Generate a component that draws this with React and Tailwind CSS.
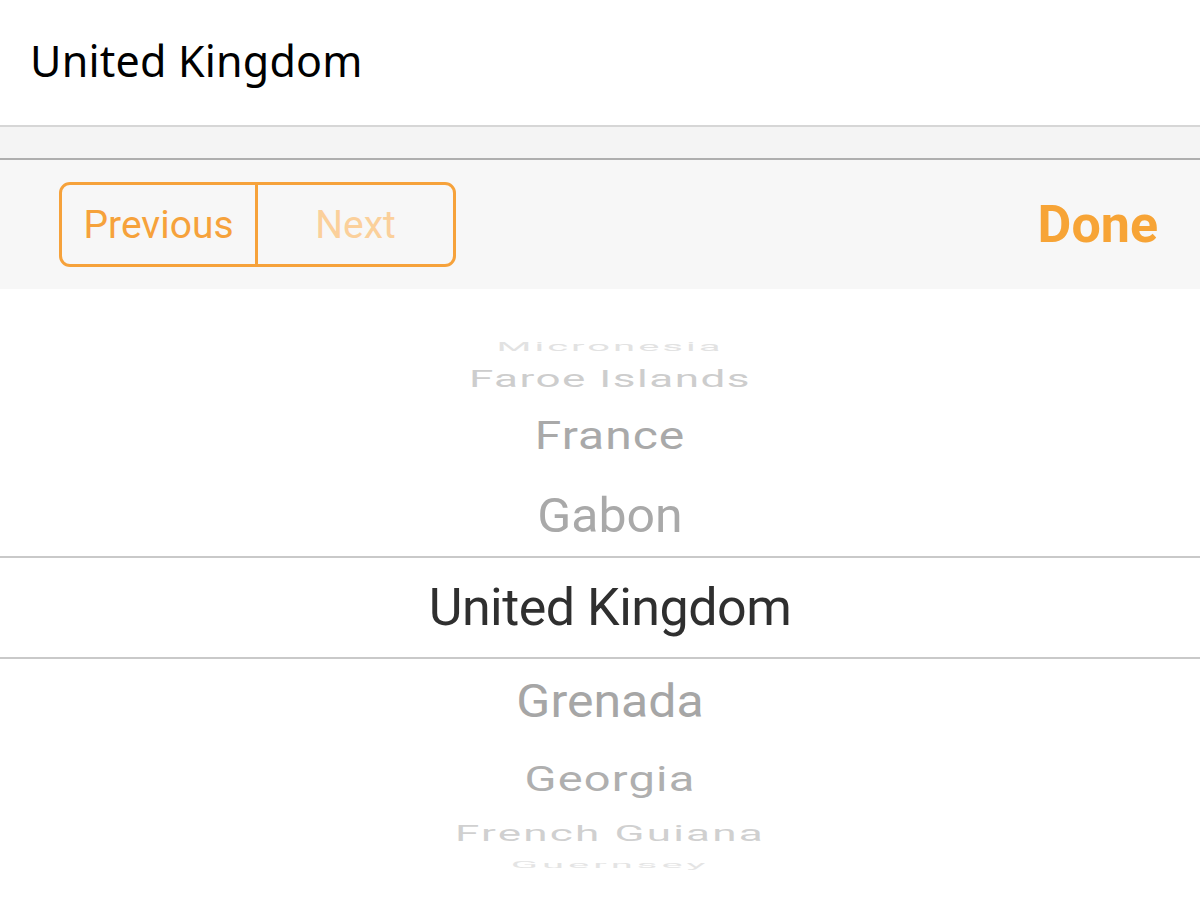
import React from 'react';

const rows = [
  { name: 'Micronesia', h: 'h-[29px]', cls: 'text-[40px] text-[#e2e2e2] tracking-[3px] scale-y-[0.3]' },
  { name: 'Faroe Islands', h: 'h-[36px]', cls: 'text-[44px] text-[#cdcdcd] tracking-[1.5px] scale-y-[0.55]' },
  { name: 'France', h: 'h-[78px]', cls: 'text-[48px] text-[#a9a9a9] tracking-[1px] scale-y-[0.8]' },
  { name: 'Gabon', h: 'h-[81px]', cls: 'text-[50px] text-[#a9a9a9] scale-y-[0.96]' },
];

const rowsBelow = [
  { name: 'Grenada', h: 'h-[84px]', cls: 'text-[50px] text-[#a6a6a6] scale-y-[0.92]' },
  { name: 'Georgia', h: 'h-[70px]', cls: 'text-[47px] text-[#afafaf] tracking-[1.2px] scale-y-[0.75]' },
  { name: 'French Guiana', h: 'h-[40px]', cls: 'text-[44px] text-[#d0d0d0] tracking-[2.2px] scale-y-[0.5]' },
  { name: 'Guernsey', h: 'h-[24px]', cls: 'text-[40px] text-[#e4e4e4] tracking-[4px] scale-y-[0.22]' },
];

const PickerRow = ({ row }) => (
  <div className={`${row.h} flex items-center justify-center overflow-hidden`}>
    <span className={`block leading-none ${row.cls}`}>{row.name}</span>
  </div>
);

export default function App() {
  return (
    <div className="w-[1200px] h-[899px] bg-white overflow-hidden" style={{ fontFamily: 'Roboto, "Liberation Sans", sans-serif' }}>
      {/* field */}
      <div className="h-[127px] flex items-center px-[30px] border-b-2 border-[#d6d6d6]">
        <span className="text-[43px] text-black tracking-[0.2px] -mt-[3px]" style={{ fontFamily: '"Noto Sans", sans-serif' }}>
          United Kingdom
        </span>
      </div>
      <div className="h-[33px] bg-[#f4f4f4] border-b-2 border-[#aeaeae]" />

      {/* toolbar */}
      <div className="h-[129px] bg-[#f7f7f7] flex items-center justify-between pl-[59px] pr-[42px]">
        <div className="flex w-[397px] h-[85px] border-[3px] border-[#f6a23b] rounded-[11px] -mt-[1px]">
          <div className="w-[196px] flex items-center justify-center pt-[2px] border-r-[3px] border-[#f6a23b] text-[39px] text-[#f6a23b]">
            Previous
          </div>
          <div className="flex-1 flex items-center justify-center pt-[2px] text-[39px] text-[#fbd09b]">
            Next
          </div>
        </div>
        <span className="text-[52px] font-bold text-[#f7a436]">Done</span>
      </div>

      {/* picker */}
      <div className="flex flex-col pl-[20px]">
        <div className="h-[43px]" />
        {rows.map(r => <PickerRow key={r.name} row={r} />)}
        <div className="h-[103px] flex items-center justify-center border-y-2 border-[#c9c9c9] -ml-[20px] pl-[20px]">
          <span className="text-[52px] text-[#2f2f2f] tracking-[-0.5px] leading-none">United Kingdom</span>
        </div>
        {rowsBelow.map(r => <PickerRow key={r.name} row={r} />)}
      </div>
    </div>
  );
}
